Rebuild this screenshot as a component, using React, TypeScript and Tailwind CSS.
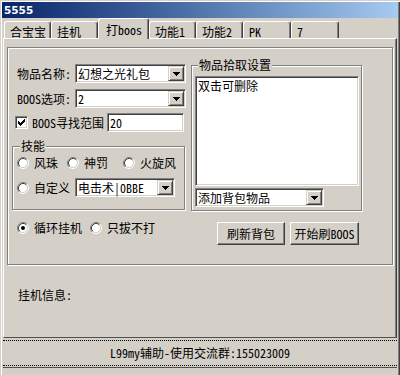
const sunken =
  'border border-t-[#808080] border-l-[#808080] border-b-white border-r-white shadow-[inset_1px_1px_#404040,inset_-1px_-1px_#d4d0c8]'
const raised =
  'border border-t-white border-l-white border-b-[#404040] border-r-[#404040] shadow-[inset_-1px_-1px_#808080]'
const etched = 'border border-[#808080] shadow-[1px_1px_#fff,inset_1px_1px_#fff]'

const tabs = [
  { label: '合宝宝', width: 'w-[47px]' },
  { label: '挂机', width: 'w-[47px]' },
  { label: '打boos', width: 'w-[51px]', active: true },
  { label: '功能1', width: 'w-[47px]' },
  { label: '功能2', width: 'w-[47px]' },
  { label: 'PK', width: 'w-[48px]' },
  { label: '7', width: 'w-[48px]' },
]

function Arrow() {
  return (
    <svg width="7" height="4" viewBox="0 0 7 4" shapeRendering="crispEdges">
      <rect x="0" y="0" width="7" height="1" />
      <rect x="1" y="1" width="5" height="1" />
      <rect x="2" y="2" width="3" height="1" />
      <rect x="3" y="3" width="1" height="1" />
    </svg>
  )
}

function Combo({ value, className }: { value: string; className: string }) {
  return (
    <div className={`${sunken} ${className} h-[19px] bg-white flex items-center pl-[2px] pr-[1px] shrink-0`}>
      <span className="flex-1 whitespace-nowrap">{value}</span>
      <span className="w-[16px] h-[15px] bg-[#d4d0c8] border border-t-[#d4d0c8] border-l-[#d4d0c8] border-b-[#404040] border-r-[#404040] shadow-[inset_1px_1px_#fff,inset_-1px_-1px_#808080] flex items-center justify-center">
        <Arrow />
      </span>
    </div>
  )
}

function Radio({ checked }: { checked?: boolean }) {
  return (
    <svg width="12" height="12" viewBox="0 0 12 12" className="shrink-0">
      <circle cx="6" cy="6" r="4.5" fill="#fff" />
      <path d="M9.89 2.11A5.5 5.5 0 0 0 2.11 9.89" fill="none" stroke="#808080" />
      <path d="M9.89 2.11A5.5 5.5 0 0 1 2.11 9.89" fill="none" stroke="#fff" />
      <path d="M9.18 2.82A4.5 4.5 0 0 0 2.82 9.18" fill="none" stroke="#404040" />
      <path d="M9.18 2.82A4.5 4.5 0 0 1 2.82 9.18" fill="none" stroke="#d4d0c8" />
      {checked ? <circle cx="6" cy="6" r="2" fill="#000" /> : null}
    </svg>
  )
}

function CheckBox() {
  return (
    <span className={`${sunken} w-[13px] h-[13px] bg-white flex items-center justify-center shrink-0`}>
      <svg width="7" height="7" viewBox="0 0 7 7" shapeRendering="crispEdges">
        <rect x="0" y="2" width="1" height="3" />
        <rect x="1" y="3" width="1" height="3" />
        <rect x="2" y="4" width="1" height="3" />
        <rect x="3" y="3" width="1" height="3" />
        <rect x="4" y="2" width="1" height="3" />
        <rect x="5" y="1" width="1" height="3" />
        <rect x="6" y="0" width="1" height="3" />
      </svg>
    </span>
  )
}

function Option({ label, checked, className }: { label: string; checked?: boolean; className: string }) {
  return (
    <div className={`${className} flex items-center gap-[5px] shrink-0`}>
      <Radio checked={checked} />
      <span>{label}</span>
    </div>
  )
}

export default function App() {
  return (
    <div className="w-[400px] h-[375px] overflow-hidden bg-[#d4d0c8] text-black text-[12px] leading-[14px] [font-family:'Noto_Sans_Mono_CJK_SC','Noto_Sans_CJK_SC',sans-serif] flex flex-col pt-[2px] px-[2px] shadow-[inset_1px_1px_#d4d0c8,inset_2px_2px_#fff,inset_-1px_0_#404040,inset_-2px_0_#808080]">
      <div className="h-[16px] shrink-0 bg-linear-to-r from-[#0a246a] to-[#a6caf0] flex items-center pl-[2px]">
        <span className="text-white font-bold text-[10.5px] [font-family:'DejaVu_Sans',sans-serif]">5555</span>
      </div>

      <div className="h-[20px] shrink-0 flex items-end pl-[2px] relative z-10">
        {tabs.map((tab) =>
          tab.active ? (
            <div
              key={tab.label}
              className={`${tab.width} h-[21px] -mb-[1px] bg-[#d4d0c8] border-t border-l border-t-white border-l-white border-r border-r-[#404040] shadow-[inset_-1px_0_#808080] rounded-t-[3px] pl-[7px] pt-[4px]`}
            >
              {tab.label}
            </div>
          ) : (
            <div
              key={tab.label}
              className={`${tab.width} h-[17px] border-t border-l border-t-white border-l-white border-r border-r-[#404040] shadow-[inset_-1px_0_#808080] rounded-t-[3px] pl-[5px] pt-[3px]`}
            >
              {tab.label}
            </div>
          ),
        )}
      </div>

      <div className="mx-[1px] h-[300px] shrink-0 border border-t-white border-l-white border-r-[#404040] border-b-[#505050] shadow-[inset_-1px_0_#808080] flex flex-col">
        <div className={`ml-[3px] mt-[8px] w-[386px] h-[218px] ${etched} flex`}>
          <div className="w-[178px] pl-[4px] flex flex-col">
            <div className="mt-[16px] h-[19px] flex items-center">
              <span className="w-[63px] pl-[5px]">物品名称:</span>
              <Combo value="幻想之光礼包" className="w-[111px]" />
            </div>
            <div className="mt-[6px] h-[19px] flex items-center">
              <span className="w-[63px] pl-[5px]">BOOS选项:</span>
              <Combo value="2" className="w-[111px]" />
            </div>
            <div className="mt-[5px] h-[19px] flex items-center">
              <span className="ml-[3px]">
                <CheckBox />
              </span>
              <span className="ml-[4px] w-[75px]">BOOS寻找范围</span>
              <div className={`${sunken} w-[77px] h-[19px] bg-white flex items-center pl-[2px]`}>20</div>
            </div>

            <div className={`relative mt-[14px] w-[173px] h-[64px] ${etched} flex flex-col`}>
              <span className="absolute left-[7px] -top-[8px] px-[1px] bg-[#d4d0c8]">技能</span>
              <div className="mt-[9px] pl-[4px] h-[14px] flex items-center">
                <Option label="风珠" className="w-[50px]" />
                <Option label="神罚" className="w-[56px]" />
                <Option label="火旋风" className="w-[56px]" />
              </div>
              <div className="mt-[8px] pl-[4px] h-[19px] flex items-center">
                <Option label="自定义" className="w-[58px]" />
                <Combo value="电击术|0BBE" className="w-[100px]" />
              </div>
            </div>

            <div className="mt-[11px] pl-[5px] h-[14px] flex items-center">
              <Option label="循环挂机" checked className="w-[73px]" />
              <Option label="只拔不打" className="w-[70px]" />
            </div>
          </div>

          <div className="ml-[5px] w-[172px] flex flex-col">
            <div className={`relative mt-[17px] w-[171px] h-[146px] ${etched} flex flex-col`}>
              <span className="absolute left-[6px] -top-[8px] px-[1px] bg-[#d4d0c8]">物品拾取设置</span>
              <div className={`${sunken} ml-[3px] mt-[10px] w-[164px] h-[110px] bg-white pl-[2px] pt-[2px]`}>
                双击可删除
              </div>
              <div className="ml-[3px] mt-[2px]">
                <Combo value="添加背包物品" className="w-[129px]" />
              </div>
            </div>
            <div className="mt-[11px] pl-[26px] flex gap-[5px]">
              <button type="button" className={`${raised} w-[68px] h-[23px] bg-[#d4d0c8] flex items-center justify-center`}>
                刷新背包
              </button>
              <button type="button" className={`${raised} w-[69px] h-[23px] bg-[#d4d0c8] flex items-center justify-center`}>
                开始刷BOOS
              </button>
            </div>
          </div>
        </div>

        <div className="mt-[23px] ml-[14px]">挂机信息:</div>
      </div>

      <div className="mx-[1px] mt-[2px] h-[26px] shrink-0 border-t border-b border-dotted border-black flex items-center justify-center">
        L99my辅助-使用交流群:155023009
      </div>
      <div className="mx-[1px] mt-[1px] border-t border-[#505050]" />
    </div>
  )
}
